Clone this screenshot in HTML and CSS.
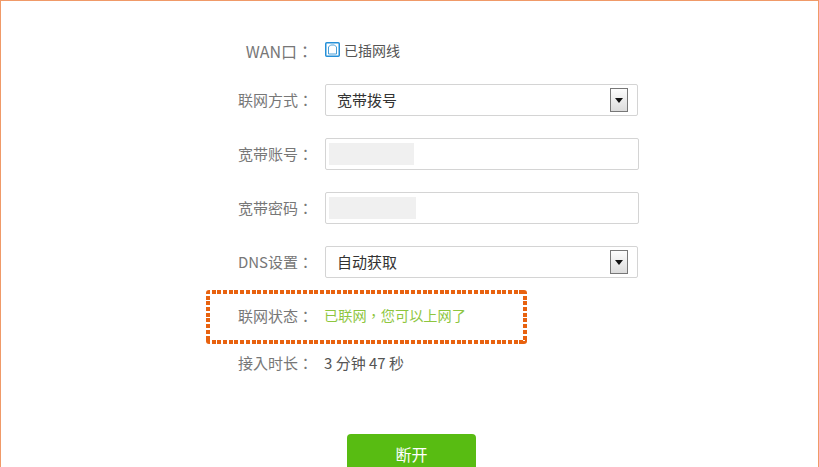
FILE: index.html
```html
<!DOCTYPE html>
<html lang="zh">
<head>
<meta charset="utf-8">
<title>WAN</title>
<link rel="stylesheet" href="styles.css">
</head>
<body>
<main class="frame">
  <form class="form">
    <div class="row row-wan">
      <span class="label" lang="zh-Hant">WAN口：</span>
      <span class="wan-status">
        <svg class="port" width="15" height="15" viewBox="0 0 15 15"><rect x="0.75" y="0.75" width="13.500" height="13.500" rx="1" fill="#fff" stroke="#2590d8" stroke-width="1.5"/><path d="M3.500 12V5L5.500 3h4L11.500 5v7z" fill="#fff" stroke="#4a9fd8" stroke-width="1"/></svg>
        已插网线
      </span>
    </div>
    <div class="row row-field">
      <span class="label" lang="zh-Hant">联网方式：</span>
      <div class="select"><span class="value">宽带拨号</span><span class="arrow"><i class="tri"></i></span></div>
    </div>
    <div class="row row-field">
      <span class="label" lang="zh-Hant">宽带账号：</span>
      <div class="input"><span class="mask"></span></div>
    </div>
    <div class="row row-field">
      <span class="label" lang="zh-Hant">宽带密码：</span>
      <div class="input"><span class="mask mask-wide"></span></div>
    </div>
    <div class="row row-field">
      <span class="label" lang="zh-Hant">DNS设置：</span>
      <div class="select"><span class="value">自动获取</span><span class="arrow"><i class="tri"></i></span></div>
    </div>
    <div class="status-wrap">
      <div class="row row-text">
        <span class="label" lang="zh-Hant">联网状态：</span>
        <span class="ok" lang="zh-Hant">已联网，您可以上网了</span>
      </div>
      <div class="dotted"></div>
    </div>
    <div class="row row-text row-time">
      <span class="label" lang="zh-Hant">接入时长：</span>
      <span class="time">3 分钟 47 秒</span>
    </div>
    <div class="actions"><button type="button" class="btn">断开</button></div>
  </form>
</main>
</body>
</html>
```
FILE: styles.css
```css
* { box-sizing: border-box; }
html, body { margin: 0; height: 100%; overflow: hidden; background: #fff; }
body { font-family: "Noto Sans CJK SC", "Liberation Sans", sans-serif; }
.frame {
  height: 467px;
  border: 1px solid #f09a68;
  border-bottom: 0;
  padding-top: 33px;
}
.form { display: flex; flex-direction: column; margin-left: 205px; }
.row { display: flex; align-items: center; }
.label {
  width: 107px;
  margin-right: 12px;
  padding-bottom: 2px;
  text-align: right;
  font-family: "Noto Sans CJK TC", "Liberation Sans", sans-serif;
  font-size: 15px;
  color: #777;
  white-space: nowrap;
}
.row-wan { height: 32px; margin-bottom: 18px; }
.row-wan .label { font-size: 16px; padding-bottom: 0; margin-top: 1px; }
.wan-status {
  display: flex;
  align-items: center;
  gap: 4px;
  font-size: 14px;
  color: #555;
  padding-bottom: 1px;
}
.port { display: block; margin-top: -1px; }
.row-field { height: 32px; margin-bottom: 22px; }
.select, .input {
  width: 313px;
  height: 32px;
  border: 1px solid #d4d4d4;
  border-radius: 2px;
  background: #fff;
  display: flex;
  align-items: center;
}
.input { width: 314px; padding-left: 3px; }
.select { padding: 0 9px 0 11px; justify-content: space-between; }
.value { font-size: 15px; color: #333; padding-bottom: 2px; }
.arrow {
  width: 18px;
  height: 24px;
  border: 1px solid #777;
  background: linear-gradient(#fdfdfd, #dcdcdc);
  display: flex;
  align-items: center;
  justify-content: center;
}
.tri {
  display: block;
  width: 0;
  height: 0;
  border-left: 4px solid transparent;
  border-right: 4px solid transparent;
  border-top: 5px solid #111;
}
.mask { display: block; width: 85px; height: 22px; background: #f0f0f0; }
.mask-wide { width: 87px; }
.status-wrap {
  position: relative;
  width: 321px;
  height: 54px;
  margin-top: -10px;
  display: flex;
  align-items: center;
}
.dotted {
  position: absolute;
  inset: 0;
  border-radius: 3px;
  background:
    repeating-linear-gradient(90deg, #e8620f 0 4px, transparent 4px 5.700px) 0 0 / 100% 4px no-repeat,
    repeating-linear-gradient(90deg, #e8620f 0 4px, transparent 4px 5.700px) 0 100% / 100% 4px no-repeat,
    repeating-linear-gradient(180deg, #e8620f 0 4px, transparent 4px 5.700px) 0 0 / 4px 100% no-repeat,
    repeating-linear-gradient(180deg, #e8620f 0 4px, transparent 4px 5.700px) 100% 0 / 4px 100% no-repeat;
}
.row-text { height: 20px; }
.row-text .label { margin-right: 11px; padding-bottom: 3px; }
.ok {
  font-family: "Noto Sans CJK TC", sans-serif;
  font-size: 14.200px;
  color: #8ec63f;
  white-space: nowrap;
  padding-bottom: 4px;
}
.row-time { margin-top: 10px; }
.time { font-size: 15px; color: #555; white-space: nowrap; padding-bottom: 3px; }
.actions { margin-top: 60px; padding-left: 141px; }
.btn {
  display: block;
  width: 129px;
  height: 40px;
  border: 0;
  border-radius: 4px;
  background: #58bc12;
  color: #fff;
  font: 16px "Noto Sans CJK SC", sans-serif;
  padding: 0 0 1px;
}
```
